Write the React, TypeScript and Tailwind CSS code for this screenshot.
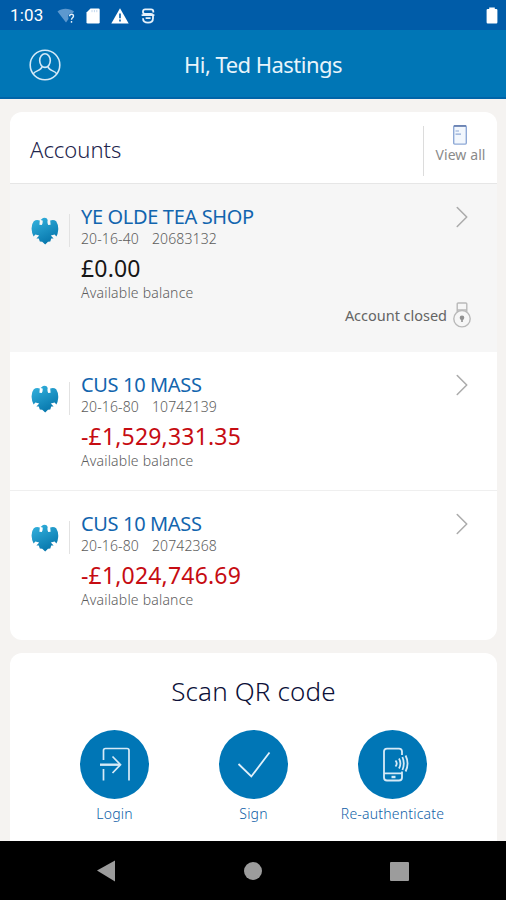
import React from 'react';
import { ChevronRight } from 'lucide-react';

interface Account {
    id: string;
    name: string;
    sortCode: string;
    number: string;
    balance: string;
    overdrawn?: boolean;
    closed?: boolean;
}

const accounts: Account[] = [
    { id: '1', name: 'YE OLDE TEA SHOP', sortCode: '20-16-40', number: '20683132', balance: '£0.00', closed: true },
    { id: '2', name: 'CUS 10 MASS', sortCode: '20-16-80', number: '10742139', balance: '-£1,529,331.35', overdrawn: true },
    { id: '3', name: 'CUS 10 MASS', sortCode: '20-16-80', number: '20742368', balance: '-£1,024,746.69', overdrawn: true },
];

const StatusBar: React.FC = () => (
    <div className="flex h-[30px] items-center bg-[#005ca8] pl-[10px] pr-2 pt-px font-['Roboto',sans-serif] text-white">
        <span className="w-[47px] text-[17px] leading-none tracking-[0.2px]">1:03</span>
        <svg width="19" height="16" viewBox="0 0 19 16" className="shrink-0">
            <path d="M0.5 3.5C5 -0.3 12 -0.3 17 3.5L15.8 5.2C13 4.5 11 6.5 11.3 9L11.5 11L9 14.5Z" fill="#5c98cf" />
            <path d="M12.6 8.2c0-2.7 3.9-2.6 3.9-.1 0 1.7-2 1.8-2 3.6M14.5 13v1.8" fill="none" stroke="#e3effa" strokeWidth="1.4" />
        </svg>
        <svg width="14" height="16" viewBox="0 0 14 16" className="ml-[10px] shrink-0">
            <path d="M4.5 0.5H12.5Q13.7 0.5 13.7 1.8V14.2Q13.7 15.5 12.5 15.5H1.8Q0.5 15.5 0.5 14.2V4.5Z" fill="#fff" />
            <path d="M6 2v2.2M8.4 2v2.2M10.8 2v2.2" stroke="#c3d8ee" strokeWidth="1" />
        </svg>
        <svg width="18" height="16" viewBox="0 0 18 16" className="ml-[11px] shrink-0">
            <path d="M9 0.3L17.7 15.5H0.3Z" fill="#fff" />
            <path d="M9 5.5v4.8M9 11.5v1.9" stroke="#005ca8" strokeWidth="1.6" />
        </svg>
        <svg width="14" height="16" viewBox="0 0 14 16" className="ml-[12px] shrink-0" fill="none" stroke="#e6f1fb" strokeWidth="1.8">
            <path d="M12.3 4.6V3.4Q12.3 1.3 10 1.3H4.2Q2 1.3 2 3.4V4.2Q2 5.8 4.2 5.8H9.8Q12 5.8 12 7.6V10.2Q12 14.6 7 14.6Q2 14.6 2 10.2M0.6 7.2H13.4M4.6 10.2H9.6" />
        </svg>
        <svg width="12" height="17" viewBox="0 0 12 17" className="ml-auto shrink-0">
            <path d="M3.2 2V0.5H8.8V2H10.3Q11.4 2 11.4 3V15.2Q11.4 16.4 10.3 16.4H1.7Q0.6 16.4 0.6 15.2V3Q0.6 2 1.7 2Z" fill="#fff" />
        </svg>
    </div>
);

const ProfileIcon: React.FC = () => (
    <svg width="32" height="32" viewBox="0 0 32 32" fill="none" stroke="#d3e9f7" strokeWidth="1.6" className="mt-px">
        <circle cx="16" cy="16" r="14.8" />
        <ellipse cx="16" cy="11.6" rx="5.3" ry="6.8" />
        <path d="M4.2 25C5.5 21.5 12.6 22 13 17.4M27.8 25C26.5 21.5 19.4 22 19 17.4" />
    </svg>
);

const Eagle: React.FC = () => (
    <svg width="28" height="28" viewBox="0 0 28 28">
        <defs>
            <linearGradient id="eagle" x1="0" y1="0" x2="0.5" y2="1">
                <stop offset="0" stopColor="#35b4e0" />
                <stop offset="1" stopColor="#0878ad" />
            </linearGradient>
        </defs>
        <path
            d="M9.6 3L12 1Q15.6 -0.2 16.7 3Q16 6 17.2 8L19.6 7.8L19.2 3.4Q22.8 2.2 25.2 4.2Q27.6 8 27.2 13Q26.8 17.4 25.4 19.6L23.6 17.4L19.8 18.4L22.6 21.4L20.2 21.6L19.3 24.4L17 24.8L14.2 27.4L11.2 24.8L8.8 24.4L7.8 21.6L5.4 21.4L8.2 18.4L4.4 17.4L2.6 19.6Q0.8 16.6 0.6 12Q0.4 7 2.8 4.2Q5.2 2.2 8.8 3.4L8.4 7.8L10.8 8Q12 6 11.6 3.4Z"
            fill="url(#eagle)"
        />
    </svg>
);

const LockIcon: React.FC = () => (
    <svg width="20" height="26" viewBox="0 0 20 26" fill="none" stroke="#b9b9b9" strokeWidth="1.4">
        <path d="M5.2 10V2Q5.2 1 6.2 1H13.8Q14.8 1 14.8 2V10M5.2 8H14.8" />
        <circle cx="10" cy="16.7" r="8.2" />
        <circle cx="10" cy="15.8" r="2.3" fill="#909090" stroke="none" />
        <path d="M10 16v4" stroke="#909090" strokeWidth="1.6" />
    </svg>
);

const AccountRow: React.FC<{ account: Account }> = ({ account }) => (
    <div
        className={`flex shrink-0 pl-[21px] ${
            account.closed ? 'h-[168px] bg-[#f6f6f6]' : 'h-[138.5px] border-b border-[#efefef] last:border-b-0'
        }`}
    >
        <div className="mt-[33px] w-[28px]">
            <Eagle />
        </div>
        <div className="ml-[10px] mt-[30px] h-[33px] w-px bg-[#e2e2e2]" />
        <div className="ml-[11px] flex flex-1 flex-col">
            <h2 className="mt-[20px] h-[25px] whitespace-nowrap text-[20px] leading-[26px] tracking-[-0.35px] text-[#1265ae]">{account.name}</h2>
            <p className="flex h-[20px] gap-[13px] whitespace-nowrap text-[14px] font-light leading-[19px] tracking-[0.12px] text-[#5c5c5c]">
                <span>{account.sortCode}</span>
                <span>{account.number}</span>
            </p>
            <p
                className={`mt-[5px] h-[29px] whitespace-nowrap text-[23px] leading-[29px] tracking-[0.18px] ${
                    account.overdrawn ? 'text-[#c60c12]' : 'text-[#161616]'
                }`}
            >
                {account.balance}
            </p>
            <p className="whitespace-nowrap text-[14px] font-light leading-[20px] tracking-[0.2px] text-[#5c5c5c]">Available balance</p>
            {account.closed && (
                <div className="-mt-px mr-[25px] flex items-center justify-end gap-[5px]">
                    <span className="text-[14.5px] leading-[26px] tracking-[-0.02px] text-[#646464]">Account closed</span>
                    <LockIcon />
                </div>
            )}
        </div>
        <div className="w-0">
            <ChevronRight size={38} strokeWidth={1} className="-ml-[54px] mt-[14px] text-[#acacac]" />
        </div>
    </div>
);

const LoginIcon: React.FC = () => (
    <svg width="68" height="68" viewBox="0 0 68 68" fill="none" stroke="#d6eaf7" strokeWidth="1.7">
        <path d="M22.5 30V20.5Q22.5 18.5 24.5 18.5H46Q48 18.5 48 20.5V50.5M22.5 39V50.5" />
        <path d="M19 34.7H39" strokeWidth="2.4" />
        <path d="M31.5 26.5L39.5 34.7L31.5 43" />
    </svg>
);

const SignIcon: React.FC = () => (
    <svg width="68" height="68" viewBox="0 0 68 68" fill="none" stroke="#e0f0fa" strokeWidth="1.8">
        <path d="M18.5 34L31.3 46.5L49.5 22.5" />
    </svg>
);

const PhoneIcon: React.FC = () => (
    <svg width="68" height="68" viewBox="0 0 68 68" fill="none" stroke="#d6eaf7" strokeWidth="1.8">
        <path d="M43 25V21.5Q43 18.6 40 18.6H28Q25 18.6 25 21.5V47.5Q25 50.5 28 50.5H40Q43 50.5 43 47.5V41.5M25 43.3H43" />
        <path d="M32.5 47H36.5" strokeWidth="2.4" />
        <path d="M36.5 30.5Q39 33.5 36.5 36.5M40 28.5Q42.8 33.5 40 38.5M43.4 27Q46.2 33.5 43.4 40M46.6 25.5Q50.5 33.5 46.6 41.5" />
    </svg>
);

const actions = [
    { label: 'Login', icon: <LoginIcon /> },
    { label: 'Sign', icon: <SignIcon /> },
    { label: 'Re-authenticate', icon: <PhoneIcon /> },
];

const App: React.FC = () => {
    return (
        <div className="flex h-[900px] w-[506px] flex-col overflow-hidden bg-[#f5f3f1] font-['Noto_Sans','Open_Sans',sans-serif]">
            <StatusBar />
            <header className="flex h-[69px] shrink-0 items-center border-b-2 border-[#0064a8] bg-[#0076b6] pl-[29px] pt-px">
                <ProfileIcon />
                <h1 className="-ml-[8px] mr-[33px] flex-1 text-center text-[22px] leading-none tracking-[-0.52px] text-[#e8f4fb]">Hi, Ted Hastings</h1>
            </header>

            <main className="flex min-h-0 flex-1 flex-col gap-[13px] overflow-hidden pl-[10px] pr-[9px] pt-[13px]">
                <section className="flex h-[528px] shrink-0 flex-col overflow-hidden rounded-[12px] bg-white">
                    <div className="flex h-[72px] shrink-0 items-center border-b border-[#e6e6e6]">
                        <h2 className="flex-1 pl-[20px] pt-[3px] text-[22px] font-light leading-[69px] text-[#1e254c]">Accounts</h2>
                        <div className="mt-[6px] h-[50px] w-px bg-[#dcdcdc]" />
                        <div className="mb-[5px] flex w-[73px] flex-col items-center">
                            <svg width="14" height="20" viewBox="0 0 14 20" fill="none" stroke="#8ea9d6" className="mr-[2px]">
                                <rect x="0.7" y="0.7" width="12.6" height="18.4" rx="1" strokeWidth="1.4" fill="#f2f7fd" />
                                <path d="M1 1H13" stroke="#6079a8" strokeWidth="1.4" />
                                <path d="M2.5 6H6M2.5 9.2H8" strokeWidth="1.2" />
                            </svg>
                            <span className="whitespace-nowrap text-[14px] leading-[20px] tracking-[0.1px] text-[#8a8a8a]">View all</span>
                        </div>
                    </div>
                    {accounts.map((account) => (
                        <AccountRow key={account.id} account={account} />
                    ))}
                </section>

                <section className="flex h-[200px] shrink-0 flex-col items-center rounded-t-[12px] bg-white">
                    <h2 className="mt-[22px] text-[26px] font-light leading-[32px] tracking-[0.15px] text-[#0c1038]">Scan QR code</h2>
                    <div className="mt-[22.5px] flex w-full justify-center">
                        {actions.map((action) => (
                            <button key={action.label} type="button" className="flex w-[139px] flex-col items-center">
                                <span className="flex size-[69px] items-center justify-center rounded-full bg-[#0076b6]">{action.icon}</span>
                                <span className="mt-[5px] text-[14px] font-light leading-[20px] tracking-[0.2px] text-[#0f5fa8]">{action.label}</span>
                            </button>
                        ))}
                    </div>
                </section>
            </main>

            <nav className="flex h-[59px] shrink-0 items-center justify-center gap-[128px] bg-black pr-px pt-px">
                <svg width="20" height="22" viewBox="0 0 20 22">
                    <path d="M1 10.5L19 0.5V21.5Z" fill="#9c9c9c" />
                </svg>
                <span className="size-[18px] rounded-full bg-[#9c9c9c]" />
                <span className="size-[19px] rounded-[1px] bg-[#9c9c9c]" />
            </nav>
        </div>
    );
};

export default App;
